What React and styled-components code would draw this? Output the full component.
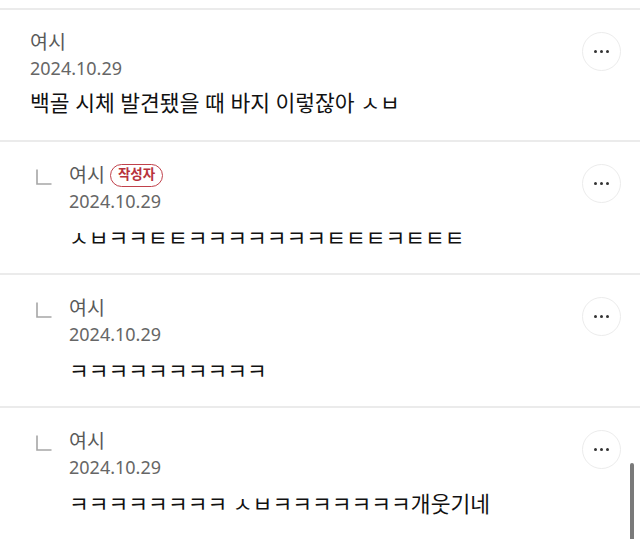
import React from 'react';
import styled, { createGlobalStyle } from 'styled-components';

const GlobalStyle = createGlobalStyle`
  html, body {
    margin: 0;
    padding: 0;
    background: #ffffff;
  }
  body {
    font-family: "Noto Sans", "Noto Sans CJK KR", sans-serif;
    -webkit-font-smoothing: antialiased;
  }
`;

const Page = styled.div`
  width: 640px;
  height: 539px;
  overflow: hidden;
  position: relative;
  background: #fff;
`;

const List = styled.ul`
  list-style: none;
  margin: 8px 0 0;
  padding: 0;
`;

const Item = styled.li`
  display: flex;
  align-items: flex-start;
  border-top: 2px solid #ebebeb;
  padding: ${(p) => (p.$reply ? '20px 19px 21px 36px' : '19px 19px 23px 30px')};
  box-sizing: border-box;
`;

const ReplyMark = styled.svg`
  flex: none;
  width: 16px;
  height: 16px;
  margin: 7px 17px 0 0;
`;

const Body = styled.div`
  flex: 1;
  min-width: 0;
`;

const NameRow = styled.div`
  display: flex;
  align-items: center;
  gap: 5px;
  height: 26px;
`;

const Name = styled.span`
  font-size: 19.5px;
  line-height: 26px;
  color: #595959;
`;

const WriterBadge = styled.span`
  display: inline-flex;
  align-items: center;
  height: 23px;
  padding: 0 7px;
  border: 1.5px solid #c0414b;
  border-radius: 12px;
  font-size: 13.5px;
  font-weight: 700;
  color: #b8323c;
  box-sizing: border-box;
  line-height: 1;
`;

const DateText = styled.div`
  font-size: 18px;
  line-height: 26px;
  color: #666666;
`;

const Content = styled.p`
  margin: ${(p) => (p.$reply ? '10px' : '8px')} 0 0;
  font-size: 21.5px;
  line-height: 28px;
  color: #111111;
  white-space: nowrap;
`;

const MoreButton = styled.button`
  flex: none;
  width: 39px;
  height: 39px;
  margin-top: ${(p) => (p.$reply ? '2px' : '3px')};
  border-radius: 50%;
  border: 1.5px solid #ececec;
  background: #fff;
  display: flex;
  align-items: center;
  justify-content: center;
  gap: 2.5px;
  padding: 0;
  box-sizing: border-box;
`;

const Dot = styled.span`
  width: 3.5px;
  height: 3.5px;
  border-radius: 50%;
  background: #333;
`;

const Scrollbar = styled.div`
  position: absolute;
  right: 6px;
  top: 463px;
  width: 4px;
  height: 90px;
  border-radius: 2px;
  background: #7a7a7a;
`;

const comments = [
  { reply: false, writer: false, text: '백골 시체 발견됐을 때 바지 이렇잖아 ㅅㅂ' },
  { reply: true, writer: true, text: 'ㅅㅂㅋㅋㅌㅌㅋㅋㅋㅋㅋㅋㅋㅌㅌㅌㅋㅌㅌㅌ' },
  { reply: true, writer: false, text: 'ㅋㅋㅋㅋㅋㅋㅋㅋㅋㅋ' },
  { reply: true, writer: false, text: 'ㅋㅋㅋㅋㅋㅋㅋㅋ ㅅㅂㅋㅋㅋㅋㅋㅋㅋ개웃기네' },
];

const Comment = ({ reply, writer, text }) => (
  <Item $reply={reply}>
    {reply && (
      <ReplyMark viewBox="0 0 16 16">
        <path d="M1 0.5V15H15.5" fill="none" stroke="#a6a6a6" strokeWidth="1.6" />
      </ReplyMark>
    )}
    <Body>
      <NameRow>
        <Name>여시</Name>
        {writer && <WriterBadge>작성자</WriterBadge>}
      </NameRow>
      <DateText>2024.10.29</DateText>
      <Content $reply={reply}>{text}</Content>
    </Body>
    <MoreButton $reply={reply} aria-label="더보기">
      <Dot />
      <Dot />
      <Dot />
    </MoreButton>
  </Item>
);

export default function App() {
  return (
    <Page>
      <GlobalStyle />
      <List>
        {comments.map((c, i) => (
          <Comment key={i} {...c} />
        ))}
      </List>
      <Scrollbar />
    </Page>
  );
}
